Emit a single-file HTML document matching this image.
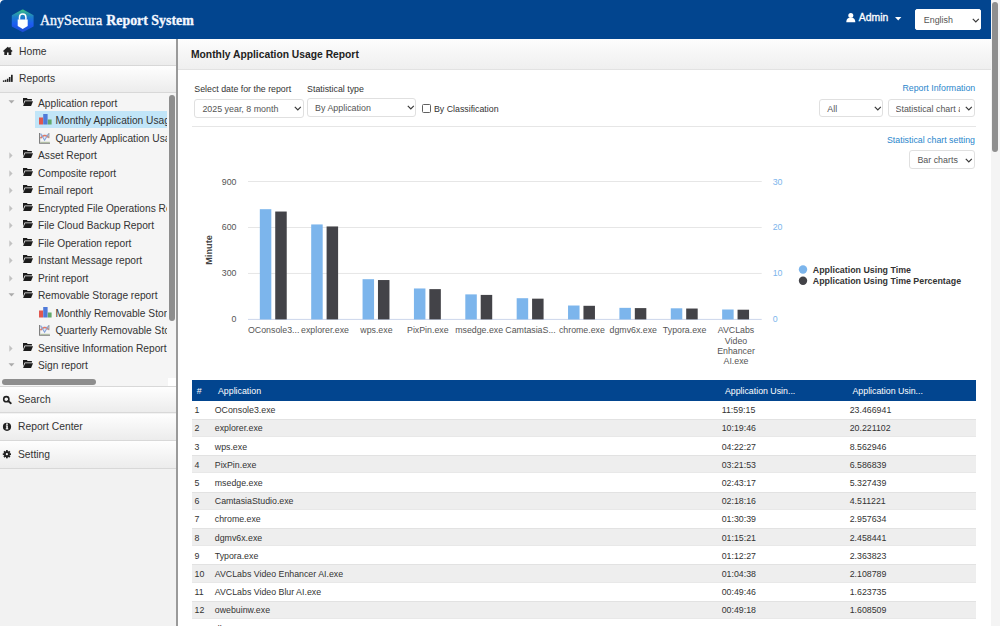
<!DOCTYPE html>
<html><head><meta charset="utf-8">
<style>
*{box-sizing:border-box;margin:0;padding:0}
html,body{width:1000px;height:626px;overflow:hidden;background:#fff;font-family:"Liberation Sans",sans-serif;color:#333}
.abs{position:absolute}
#hdr{position:absolute;left:0;top:0;width:991px;height:39px;background:#02458f}
#brand{position:absolute;left:40px;top:10.5px;font-family:"Liberation Serif",serif;font-weight:700;color:#f4f8ff;white-space:nowrap}
#side{position:absolute;left:0;top:39px;width:176px;height:587px;background:#f2f2f2}
#sbord{position:absolute;left:176px;top:39px;width:2px;height:587px;background:#9a9a9a}
.nav{position:absolute;left:0;width:176px;height:27px;background:linear-gradient(#fefefe,#ececec);border-bottom:1px solid #d8d8d8;font-size:10.3px;color:#333}
.nav span{position:absolute;left:19px;top:7px}
#tree{position:absolute;left:0;top:93px;width:176px;height:293px;background:#f5f5f5;overflow:hidden}
.tr{position:absolute;white-space:nowrap;font-size:10.2px;color:#333;height:17.5px;line-height:17.5px}
.sel{position:absolute;height:19px;border:1px solid #e0e0e0;border-radius:3px;background:#fff;font-size:8.9px;color:#555;white-space:nowrap;overflow:hidden}
.sel span{position:absolute;left:7px;top:4px}
.sel svg{position:absolute;top:7px}
.lbl{position:absolute;font-size:8.8px;color:#333;white-space:nowrap}
.lnk{position:absolute;font-size:8.8px;color:#2a86cc;white-space:nowrap}
#main{position:absolute;left:178px;top:39px;width:813px;height:587px;background:#fff}
#title{position:absolute;left:178px;top:39px;width:813px;height:31px;background:linear-gradient(#fdfdfd,#efefef);border-bottom:1px solid #e2e2e2}
#title span{position:absolute;left:13px;top:10px;font-weight:700;font-size:10.3px;color:#222}
#scroll{position:absolute;left:991px;top:0;width:9px;height:626px;background:#f4f4f4}
#thumb{position:absolute;left:992px;top:2px;width:6px;height:150px;background:#8f8f8f;border-radius:3px}
.xl{font-size:8.8px;fill:#555}
.yl{font-size:8.8px;fill:#555}
.yr{font-size:8.8px;fill:#7cb5ec}
.yt{font-size:9.2px;font-weight:700;fill:#444}
.lg{font-size:8.85px;font-weight:700;fill:#333}
table{border-collapse:collapse}
.tr svg{position:absolute}
.tr span{top:0.6px}
.sel1{background:#c1e5f8}
#tclip{position:absolute;left:0;top:0;width:167px;height:285px;overflow:hidden}
#vsb{position:absolute;left:168.5px;top:1.6px;width:6.4px;height:226px;background:#8e8e8e;border-radius:3px}
#hsb{position:absolute;left:1.5px;top:285.5px;width:94.5px;height:6.5px;background:#8e8e8e;border-radius:3.25px}
#tbl{position:absolute;left:192.2px;top:380.2px;width:783.8px;height:260px}
.th{position:absolute;left:0;top:0;width:100%;height:20.5px;background:#02458f;color:#fff;font-size:8.8px}
.th span{position:absolute;top:5.5px;white-space:nowrap}
.rw{position:absolute;left:0;width:100%;height:18.2px;font-size:8.8px;color:#333}
.rw.g{background:#eeeeee;border-top:1px solid #e2e2e2;border-bottom:1px solid #e8e8e8}
.rw span{position:absolute;top:4.5px;white-space:nowrap}
.rw.g span{top:3.5px}
</style></head><body>
<div id="hdr"></div>
<svg class="abs" style="left:0;top:0" width="40" height="39">
<defs><linearGradient id="hg" x1="0" y1="0" x2="0" y2="1"><stop offset="0" stop-color="#35b98a"/><stop offset="0.3" stop-color="#1f80c8"/><stop offset="0.65" stop-color="#1f5cf2"/><stop offset="1" stop-color="#1b4ed2"/></linearGradient><filter id="bl" x="-0.2" y="-0.2" width="1.4" height="1.4"><feGaussianBlur stdDeviation="0.45"/></filter></defs>
<g filter="url(#bl)">
<path d="M22.7 10.3 L32.7 15.7 L32.7 25.9 L22.7 31.3 L12.7 25.9 L12.7 15.7 Z" fill="url(#hg)" stroke="url(#hg)" stroke-width="1.8" stroke-linejoin="round"/>
<path d="M19.5 19.8 V17.3 A3.2 3.2 0 0 1 25.9 17.3 V19.8" fill="none" stroke="#fff" stroke-width="1.5"/>
<path d="M17.7 19.5 H27.7 V26.1 L22.7 29.1 L17.7 26.1 Z" fill="#fff"/>
</g>
</svg>
<div id="brand"><span style="font-size:14px;font-weight:400;-webkit-text-stroke:0.35px #f4f8ff">AnySecura</span> <span style="font-size:13.9px;-webkit-text-stroke:0.3px #f4f8ff">Report System</span></div>

<svg class="abs" style="left:845.5px;top:13px" width="10" height="10"><circle cx="4.8" cy="2.6" r="2.5" fill="#fff"/><path d="M0.3 9.3 C0.3 6 2 5 3 5 L6.6 5 C7.6 5 9.3 6 9.3 9.3 Z" fill="#fff"/></svg>
<div class="abs" style="left:858.8px;top:12.2px;font-size:10.4px;font-weight:400;color:#fff;-webkit-text-stroke:0.3px #fff">Admin</div>
<svg class="abs" style="left:894.5px;top:17px" width="7" height="4"><path d="M0 0 H6.4 L3.2 3.6 Z" fill="#fff"/></svg>
<div class="sel" style="left:914.8px;top:8.5px;width:66.2px;height:21.3px;border-color:#fff;border-radius:2px"><span style="left:8px;top:5.5px;font-size:8.9px;color:#555">English</span><svg style="left:56px;top:8.5px" width="8" height="5"><path d="M0.8 0.8 L3.8 3.8 L6.8 0.8" fill="none" stroke="#3a3a3a" stroke-width="1.2"/></svg></div>
<div id="side"></div>
<div class="nav" style="top:39px;height:26.6px"><span>Home</span></div>
<div class="nav" style="top:65.6px;height:27.2px"><span>Reports</span></div>
<div id="tree"><div id="tclip">

<div class="tr" style="top:1.05px;left:0"><svg class="ar" style="left:8px;top:6.4px" width="7" height="4"><path d="M0.5 0.3 L6.5 0.3 L3.5 3.6 Z" fill="#ababab"/></svg><svg class="ic" style="left:22.5px;top:3.5px" width="10" height="9" viewBox="0 0 10 9"><path d="M0 0 H3.8 L4.7 1.1 H8.9 V2.4 H1.6 L0 6.6 Z" fill="#1b1b1b"/><path d="M2.1 3.2 H10 L8.1 8.1 H0.1 Z" fill="#1b1b1b"/></svg><span style="position:absolute;left:38px">Application report</span></div>
<div class="tr sel1" style="top:17.75px;left:35px;width:132px"><svg class="ic" style="left:3.5px;top:3.6px" width="13" height="11" viewBox="0 0 13 11"><rect x="0" y="3.5" width="4" height="7" fill="#e0574f"/><rect x="4.2" y="0" width="4.4" height="10.5" fill="#4f7ad9"/><rect x="8.8" y="5.5" width="3.8" height="5" fill="#63a96a"/></svg><span style="position:absolute;left:20.5px;top:1.4px">Monthly Application Usage Report</span></div>
<div class="tr" style="top:36.05px;left:35px;width:132px"><svg class="ic" style="left:3.8px;top:3.5px" width="12" height="11" viewBox="0 0 12 11"><path d="M1.8 0.8 L5.6 7.2 L9.4 1 Z" fill="#dfeaf6"/><path d="M1.5 5.2 Q5.5 0.2 9.6 4.6" stroke="#e07a66" stroke-width="1.5" fill="none"/><path d="M1.6 0.6 L5.6 7.2 L9.5 0.8" stroke="#86a3da" stroke-width="1.1" fill="none"/><path d="M0.6 -0.3 V10.2 H11" stroke="#7a7a7a" stroke-width="1.1" fill="none"/><path d="M9.9 0 V5.2" stroke="#888" stroke-width="0.9"/><path d="M1.4 9.3 H10.8" stroke="#a8b89a" stroke-width="1"/></svg><span style="position:absolute;left:20.5px">Quarterly Application Usage Report</span></div>
<div class="tr" style="top:53.55px;left:0"><svg class="ar" style="left:8.8px;top:5.5px" width="4" height="7"><path d="M0.3 0.3 L3.6 3.5 L0.3 6.7 Z" fill="#c2c2c2"/></svg><svg class="ic" style="left:22.5px;top:3.5px" width="10" height="9" viewBox="0 0 10 9"><path d="M0 0 H3.8 L4.7 1.1 H8.9 V2.4 H1.6 L0 6.6 Z" fill="#1b1b1b"/><path d="M2.1 3.2 H10 L8.1 8.1 H0.1 Z" fill="#1b1b1b"/></svg><span style="position:absolute;left:38px">Asset Report</span></div>
<div class="tr" style="top:71.05px;left:0"><svg class="ar" style="left:8.8px;top:5.5px" width="4" height="7"><path d="M0.3 0.3 L3.6 3.5 L0.3 6.7 Z" fill="#c2c2c2"/></svg><svg class="ic" style="left:22.5px;top:3.5px" width="10" height="9" viewBox="0 0 10 9"><path d="M0 0 H3.8 L4.7 1.1 H8.9 V2.4 H1.6 L0 6.6 Z" fill="#1b1b1b"/><path d="M2.1 3.2 H10 L8.1 8.1 H0.1 Z" fill="#1b1b1b"/></svg><span style="position:absolute;left:38px">Composite report</span></div>
<div class="tr" style="top:88.55px;left:0"><svg class="ar" style="left:8.8px;top:5.5px" width="4" height="7"><path d="M0.3 0.3 L3.6 3.5 L0.3 6.7 Z" fill="#c2c2c2"/></svg><svg class="ic" style="left:22.5px;top:3.5px" width="10" height="9" viewBox="0 0 10 9"><path d="M0 0 H3.8 L4.7 1.1 H8.9 V2.4 H1.6 L0 6.6 Z" fill="#1b1b1b"/><path d="M2.1 3.2 H10 L8.1 8.1 H0.1 Z" fill="#1b1b1b"/></svg><span style="position:absolute;left:38px">Email report</span></div>
<div class="tr" style="top:106.05px;left:0"><svg class="ar" style="left:8.8px;top:5.5px" width="4" height="7"><path d="M0.3 0.3 L3.6 3.5 L0.3 6.7 Z" fill="#c2c2c2"/></svg><svg class="ic" style="left:22.5px;top:3.5px" width="10" height="9" viewBox="0 0 10 9"><path d="M0 0 H3.8 L4.7 1.1 H8.9 V2.4 H1.6 L0 6.6 Z" fill="#1b1b1b"/><path d="M2.1 3.2 H10 L8.1 8.1 H0.1 Z" fill="#1b1b1b"/></svg><span style="position:absolute;left:38px">Encrypted File Operations Report</span></div>
<div class="tr" style="top:123.55px;left:0"><svg class="ar" style="left:8.8px;top:5.5px" width="4" height="7"><path d="M0.3 0.3 L3.6 3.5 L0.3 6.7 Z" fill="#c2c2c2"/></svg><svg class="ic" style="left:22.5px;top:3.5px" width="10" height="9" viewBox="0 0 10 9"><path d="M0 0 H3.8 L4.7 1.1 H8.9 V2.4 H1.6 L0 6.6 Z" fill="#1b1b1b"/><path d="M2.1 3.2 H10 L8.1 8.1 H0.1 Z" fill="#1b1b1b"/></svg><span style="position:absolute;left:38px">File Cloud Backup Report</span></div>
<div class="tr" style="top:141.05px;left:0"><svg class="ar" style="left:8.8px;top:5.5px" width="4" height="7"><path d="M0.3 0.3 L3.6 3.5 L0.3 6.7 Z" fill="#c2c2c2"/></svg><svg class="ic" style="left:22.5px;top:3.5px" width="10" height="9" viewBox="0 0 10 9"><path d="M0 0 H3.8 L4.7 1.1 H8.9 V2.4 H1.6 L0 6.6 Z" fill="#1b1b1b"/><path d="M2.1 3.2 H10 L8.1 8.1 H0.1 Z" fill="#1b1b1b"/></svg><span style="position:absolute;left:38px">File Operation report</span></div>
<div class="tr" style="top:158.55px;left:0"><svg class="ar" style="left:8.8px;top:5.5px" width="4" height="7"><path d="M0.3 0.3 L3.6 3.5 L0.3 6.7 Z" fill="#c2c2c2"/></svg><svg class="ic" style="left:22.5px;top:3.5px" width="10" height="9" viewBox="0 0 10 9"><path d="M0 0 H3.8 L4.7 1.1 H8.9 V2.4 H1.6 L0 6.6 Z" fill="#1b1b1b"/><path d="M2.1 3.2 H10 L8.1 8.1 H0.1 Z" fill="#1b1b1b"/></svg><span style="position:absolute;left:38px">Instant Message report</span></div>
<div class="tr" style="top:176.05px;left:0"><svg class="ar" style="left:8.8px;top:5.5px" width="4" height="7"><path d="M0.3 0.3 L3.6 3.5 L0.3 6.7 Z" fill="#c2c2c2"/></svg><svg class="ic" style="left:22.5px;top:3.5px" width="10" height="9" viewBox="0 0 10 9"><path d="M0 0 H3.8 L4.7 1.1 H8.9 V2.4 H1.6 L0 6.6 Z" fill="#1b1b1b"/><path d="M2.1 3.2 H10 L8.1 8.1 H0.1 Z" fill="#1b1b1b"/></svg><span style="position:absolute;left:38px">Print report</span></div>
<div class="tr" style="top:193.55px;left:0"><svg class="ar" style="left:8px;top:6.4px" width="7" height="4"><path d="M0.5 0.3 L6.5 0.3 L3.5 3.6 Z" fill="#ababab"/></svg><svg class="ic" style="left:22.5px;top:3.5px" width="10" height="9" viewBox="0 0 10 9"><path d="M0 0 H3.8 L4.7 1.1 H8.9 V2.4 H1.6 L0 6.6 Z" fill="#1b1b1b"/><path d="M2.1 3.2 H10 L8.1 8.1 H0.1 Z" fill="#1b1b1b"/></svg><span style="position:absolute;left:38px">Removable Storage report</span></div>
<div class="tr" style="top:211.05px;left:35px;width:132px"><svg class="ic" style="left:3.5px;top:2.8px" width="13" height="11" viewBox="0 0 13 11"><rect x="0" y="3.5" width="4" height="7" fill="#e0574f"/><rect x="4.2" y="0" width="4.4" height="10.5" fill="#4f7ad9"/><rect x="8.8" y="5.5" width="3.8" height="5" fill="#63a96a"/></svg><span style="position:absolute;left:20.5px">Monthly Removable Storage Report</span></div>
<div class="tr" style="top:228.55px;left:35px;width:132px"><svg class="ic" style="left:3.8px;top:3.5px" width="12" height="11" viewBox="0 0 12 11"><path d="M1.8 0.8 L5.6 7.2 L9.4 1 Z" fill="#dfeaf6"/><path d="M1.5 5.2 Q5.5 0.2 9.6 4.6" stroke="#e07a66" stroke-width="1.5" fill="none"/><path d="M1.6 0.6 L5.6 7.2 L9.5 0.8" stroke="#86a3da" stroke-width="1.1" fill="none"/><path d="M0.6 -0.3 V10.2 H11" stroke="#7a7a7a" stroke-width="1.1" fill="none"/><path d="M9.9 0 V5.2" stroke="#888" stroke-width="0.9"/><path d="M1.4 9.3 H10.8" stroke="#a8b89a" stroke-width="1"/></svg><span style="position:absolute;left:20.5px">Quarterly Removable Storage Report</span></div>
<div class="tr" style="top:246.05px;left:0"><svg class="ar" style="left:8.8px;top:5.5px" width="4" height="7"><path d="M0.3 0.3 L3.6 3.5 L0.3 6.7 Z" fill="#c2c2c2"/></svg><svg class="ic" style="left:22.5px;top:3.5px" width="10" height="9" viewBox="0 0 10 9"><path d="M0 0 H3.8 L4.7 1.1 H8.9 V2.4 H1.6 L0 6.6 Z" fill="#1b1b1b"/><path d="M2.1 3.2 H10 L8.1 8.1 H0.1 Z" fill="#1b1b1b"/></svg><span style="position:absolute;left:38px">Sensitive Information Report</span></div>
<div class="tr" style="top:263.55px;left:0"><svg class="ar" style="left:8px;top:6.4px" width="7" height="4"><path d="M0.5 0.3 L6.5 0.3 L3.5 3.6 Z" fill="#ababab"/></svg><svg class="ic" style="left:22.5px;top:3.5px" width="10" height="9" viewBox="0 0 10 9"><path d="M0 0 H3.8 L4.7 1.1 H8.9 V2.4 H1.6 L0 6.6 Z" fill="#1b1b1b"/><path d="M2.1 3.2 H10 L8.1 8.1 H0.1 Z" fill="#1b1b1b"/></svg><span style="position:absolute;left:38px">Sign report</span></div>
</div><div id="vsb"></div><div id="hsb"></div><div style="position:absolute;left:168px;top:285px;width:8px;height:8px;background:#fff"></div></div>
<div class="nav" style="top:385.7px;height:27.8px;border-top:1px solid #d8d8d8"><span style="left:18px;top:7.4px">Search</span></div>
<div class="nav" style="top:413.5px;height:27.2px"><span style="left:18px;top:7.8px">Report Center</span></div>
<div class="nav" style="top:440.7px;height:28px"><span style="left:18px;top:8.3px">Setting</span></div>
<svg class="abs" style="left:0;top:39px" width="16" height="440" viewBox="0 39 16 440">
<path d="M7.8 46.8 L3 51 L4 51.9 L4.3 51.6 V55 H7 V52.6 H8.6 V55 H11.3 V51.6 L11.6 51.9 L12.6 51 L10.6 49.2 V47 H9.4 V48.2 Z" fill="#222"/>
<rect x="2.9" y="80.4" width="1.5" height="1.5" fill="#222"/><rect x="4.9" y="79.8" width="1.5" height="2.1" fill="#222"/><rect x="6.9" y="78.7" width="1.5" height="3.2" fill="#222"/><rect x="8.9" y="77" width="1.6" height="4.9" fill="#222"/><rect x="11" y="74.8" width="1.7" height="7.1" fill="#222"/>
<circle cx="6.3" cy="399.2" r="2.6" fill="none" stroke="#222" stroke-width="1.6"/><path d="M8.2 401.1 L10.8 403.2" stroke="#222" stroke-width="1.9" stroke-linecap="round"/>
<circle cx="7" cy="426.8" r="4.1" fill="#222"/><rect x="6.3" y="425.7" width="1.5" height="3.4" fill="#fff"/><rect x="5.7" y="428.4" width="2.6" height="0.9" fill="#fff"/><rect x="5.8" y="425.5" width="1.8" height="0.8" fill="#fff"/><circle cx="7" cy="424.2" r="0.85" fill="#fff"/>
<g transform="translate(6.9 454.2)"><circle r="2.9" fill="#222"/><g fill="#222"><rect x="-0.9" y="-4.1" width="1.8" height="8.2"/><rect x="-0.9" y="-4.1" width="1.8" height="8.2" transform="rotate(45)"/><rect x="-0.9" y="-4.1" width="1.8" height="8.2" transform="rotate(90)"/><rect x="-0.9" y="-4.1" width="1.8" height="8.2" transform="rotate(135)"/></g><circle r="1.1" fill="#f2f2f2"/></g>
</svg>
<div id="sbord"></div>

<div id="main"></div>
<div id="title"><span>Monthly Application Usage Report</span></div>

<div class="lbl" style="left:194.3px;top:83.6px">Select date for the report</div>
<div class="lbl" style="left:307.1px;top:83.6px">Statistical type</div>
<div class="sel" style="left:194.4px;top:98.5px;width:109.4px;height:19px"><span style="left:7px">2025 year, 8 month</span><svg style="left:98.5px;top:6.3px" width="8" height="5"><path d="M0.8 0.8 L3.8 3.8 L6.8 0.8" fill="none" stroke="#3a3a3a" stroke-width="1.2"/></svg></div>
<div class="sel" style="left:307.1px;top:98.2px;width:109.4px;height:19px"><span style="left:7px">By Application</span><svg style="left:98.8px;top:6.3px" width="8" height="5"><path d="M0.8 0.8 L3.8 3.8 L6.8 0.8" fill="none" stroke="#3a3a3a" stroke-width="1.2"/></svg></div>
<div class="abs" style="left:422.3px;top:104.2px;width:9px;height:9px;border:1px solid #606060;border-radius:1.5px;background:#fff"></div>
<div class="lbl" style="left:434px;top:104px">By Classification</div>
<div class="lnk" style="left:902.4px;top:83px">Report Information</div>
<div class="sel" style="left:818.8px;top:98.6px;width:64.7px;height:18.6px"><span style="left:7.5px">All</span><svg style="left:54.5px;top:6.3px" width="8" height="5"><path d="M0.8 0.8 L3.8 3.8 L6.8 0.8" fill="none" stroke="#3a3a3a" stroke-width="1.2"/></svg></div>
<div class="sel" style="left:887.5px;top:98.6px;width:87px;height:18.6px"><span style="left:7px;width:64px;overflow:hidden">Statistical chart a</span><svg style="left:76.5px;top:6.3px" width="8" height="5"><path d="M0.8 0.8 L3.8 3.8 L6.8 0.8" fill="none" stroke="#3a3a3a" stroke-width="1.2"/></svg></div>
<div class="abs" style="left:192px;top:126px;width:784px;height:1px;background:#e6e6e6"></div>
<div class="lnk" style="left:887px;top:135px">Statistical chart setting</div>
<div class="sel" style="left:909.4px;top:150.3px;width:65.6px;height:19px"><span style="left:7px">Bar charts</span><svg style="left:54.5px;top:6.3px" width="8" height="5"><path d="M0.8 0.8 L3.8 3.8 L6.8 0.8" fill="none" stroke="#3a3a3a" stroke-width="1.2"/></svg></div>
<!--chart-->
<svg class="abs" style="left:0;top:0" width="1000" height="380" viewBox="0 0 1000 380">
<rect x="248.0" y="181.00" width="513.7" height="1" fill="#e6e6e6"/>
<rect x="248.0" y="226.97" width="513.7" height="1" fill="#e6e6e6"/>
<rect x="248.0" y="272.93" width="513.7" height="1" fill="#e6e6e6"/>
<rect x="248.0" y="318.90" width="513.7" height="1" fill="#ccd6eb"/>
<rect x="259.82" y="209.19" width="11.5" height="110.21" fill="#7cb5ec"/>
<rect x="275.23" y="211.53" width="11.5" height="107.87" fill="#434348"/>
<rect x="311.19" y="224.44" width="11.5" height="94.96" fill="#7cb5ec"/>
<rect x="326.60" y="226.45" width="11.5" height="92.95" fill="#434348"/>
<rect x="362.56" y="279.19" width="11.5" height="40.21" fill="#7cb5ec"/>
<rect x="377.97" y="280.04" width="11.5" height="39.36" fill="#434348"/>
<rect x="413.93" y="288.47" width="11.5" height="30.93" fill="#7cb5ec"/>
<rect x="429.34" y="289.12" width="11.5" height="30.28" fill="#434348"/>
<rect x="465.30" y="294.38" width="11.5" height="25.02" fill="#7cb5ec"/>
<rect x="480.71" y="294.91" width="11.5" height="24.49" fill="#434348"/>
<rect x="516.67" y="298.21" width="11.5" height="21.19" fill="#7cb5ec"/>
<rect x="532.08" y="298.66" width="11.5" height="20.74" fill="#434348"/>
<rect x="568.04" y="305.51" width="11.5" height="13.89" fill="#7cb5ec"/>
<rect x="583.45" y="305.80" width="11.5" height="13.60" fill="#434348"/>
<rect x="619.41" y="307.85" width="11.5" height="11.55" fill="#7cb5ec"/>
<rect x="634.82" y="308.10" width="11.5" height="11.30" fill="#434348"/>
<rect x="670.78" y="308.30" width="11.5" height="11.10" fill="#7cb5ec"/>
<rect x="686.19" y="308.53" width="11.5" height="10.87" fill="#434348"/>
<rect x="722.15" y="309.50" width="11.5" height="9.90" fill="#7cb5ec"/>
<rect x="737.56" y="309.71" width="11.5" height="9.69" fill="#434348"/>
<text x="273.69" y="333.30" text-anchor="middle" class="xl">OConsole3...</text>
<text x="325.06" y="333.30" text-anchor="middle" class="xl">explorer.exe</text>
<text x="376.43" y="333.30" text-anchor="middle" class="xl">wps.exe</text>
<text x="427.80" y="333.30" text-anchor="middle" class="xl">PixPin.exe</text>
<text x="479.17" y="333.30" text-anchor="middle" class="xl">msedge.exe</text>
<text x="530.54" y="333.30" text-anchor="middle" class="xl">CamtasiaS...</text>
<text x="581.90" y="333.30" text-anchor="middle" class="xl">chrome.exe</text>
<text x="633.28" y="333.30" text-anchor="middle" class="xl">dgmv6x.exe</text>
<text x="684.64" y="333.30" text-anchor="middle" class="xl">Typora.exe</text>
<text x="736.02" y="333.30" text-anchor="middle" class="xl">AVCLabs</text>
<text x="736.02" y="343.60" text-anchor="middle" class="xl">Video</text>
<text x="736.02" y="353.90" text-anchor="middle" class="xl">Enhancer</text>
<text x="736.02" y="364.20" text-anchor="middle" class="xl">AI.exe</text>
<text x="236.5" y="184.50" text-anchor="end" class="yl">900</text>
<text x="236.5" y="230.47" text-anchor="end" class="yl">600</text>
<text x="236.5" y="276.43" text-anchor="end" class="yl">300</text>
<text x="236.5" y="322.40" text-anchor="end" class="yl">0</text>
<text x="772.7" y="184.50" class="yr">30</text>
<text x="772.7" y="230.47" class="yr">20</text>
<text x="772.7" y="276.43" class="yr">10</text>
<text x="772.7" y="322.40" class="yr">0</text>
<text transform="translate(212.3,250) rotate(-90)" text-anchor="middle" class="yt">Minute</text>
<circle cx="803" cy="269.5" r="4.2" fill="#7cb5ec"/><circle cx="803" cy="280.8" r="4.2" fill="#434348"/>
<text x="812.8" y="272.6" class="lg">Application Using Time</text><text x="812.8" y="283.9" class="lg">Application Using Time Percentage</text>
</svg>
<!--/chart-->
<div id="tbl">
<div class="th"><span style="left:4.5px">#</span><span style="left:25.8px">Application</span><span style="left:532.7px">Application Usin...</span><span style="left:660.3px">Application Usin...</span></div>
<div class="rw" style="top:20.50px"><span style="left:2.3px">1</span><span style="left:22.6px">OConsole3.exe</span><span style="left:529.5px">11:59:15</span><span style="left:657.5px">23.466941</span></div>
<div class="rw g" style="top:38.70px"><span style="left:2.3px">2</span><span style="left:22.6px">explorer.exe</span><span style="left:529.5px">10:19:46</span><span style="left:657.5px">20.221102</span></div>
<div class="rw" style="top:56.90px"><span style="left:2.3px">3</span><span style="left:22.6px">wps.exe</span><span style="left:529.5px">04:22:27</span><span style="left:657.5px">8.562946</span></div>
<div class="rw g" style="top:75.10px"><span style="left:2.3px">4</span><span style="left:22.6px">PixPin.exe</span><span style="left:529.5px">03:21:53</span><span style="left:657.5px">6.586839</span></div>
<div class="rw" style="top:93.30px"><span style="left:2.3px">5</span><span style="left:22.6px">msedge.exe</span><span style="left:529.5px">02:43:17</span><span style="left:657.5px">5.327439</span></div>
<div class="rw g" style="top:111.50px"><span style="left:2.3px">6</span><span style="left:22.6px">CamtasiaStudio.exe</span><span style="left:529.5px">02:18:16</span><span style="left:657.5px">4.511221</span></div>
<div class="rw" style="top:129.70px"><span style="left:2.3px">7</span><span style="left:22.6px">chrome.exe</span><span style="left:529.5px">01:30:39</span><span style="left:657.5px">2.957634</span></div>
<div class="rw g" style="top:147.90px"><span style="left:2.3px">8</span><span style="left:22.6px">dgmv6x.exe</span><span style="left:529.5px">01:15:21</span><span style="left:657.5px">2.458441</span></div>
<div class="rw" style="top:166.10px"><span style="left:2.3px">9</span><span style="left:22.6px">Typora.exe</span><span style="left:529.5px">01:12:27</span><span style="left:657.5px">2.363823</span></div>
<div class="rw g" style="top:184.30px"><span style="left:2.3px">10</span><span style="left:22.6px">AVCLabs Video Enhancer AI.exe</span><span style="left:529.5px">01:04:38</span><span style="left:657.5px">2.108789</span></div>
<div class="rw" style="top:202.50px"><span style="left:2.3px">11</span><span style="left:22.6px">AVCLabs Video Blur AI.exe</span><span style="left:529.5px">00:49:46</span><span style="left:657.5px">1.623735</span></div>
<div class="rw g" style="top:220.70px"><span style="left:2.3px">12</span><span style="left:22.6px">owebuinw.exe</span><span style="left:529.5px">00:49:18</span><span style="left:657.5px">1.608509</span></div>
<div class="rw" style="top:238.90px"><span style="left:2.3px">13</span><span style="left:22.6px">dbeaver.exe</span><span style="left:529.5px">00:38:05</span><span style="left:657.5px">1.249703</span></div>
</div>
<svg class="abs" style="left:0;top:0" width="6" height="6"><path d="M0 0 H4.5 A4.5 4.5 0 0 0 0 4.5 Z" fill="#f4f6fb"/></svg>
<div id="scroll"></div>
<div id="thumb"></div>
</body></html>
